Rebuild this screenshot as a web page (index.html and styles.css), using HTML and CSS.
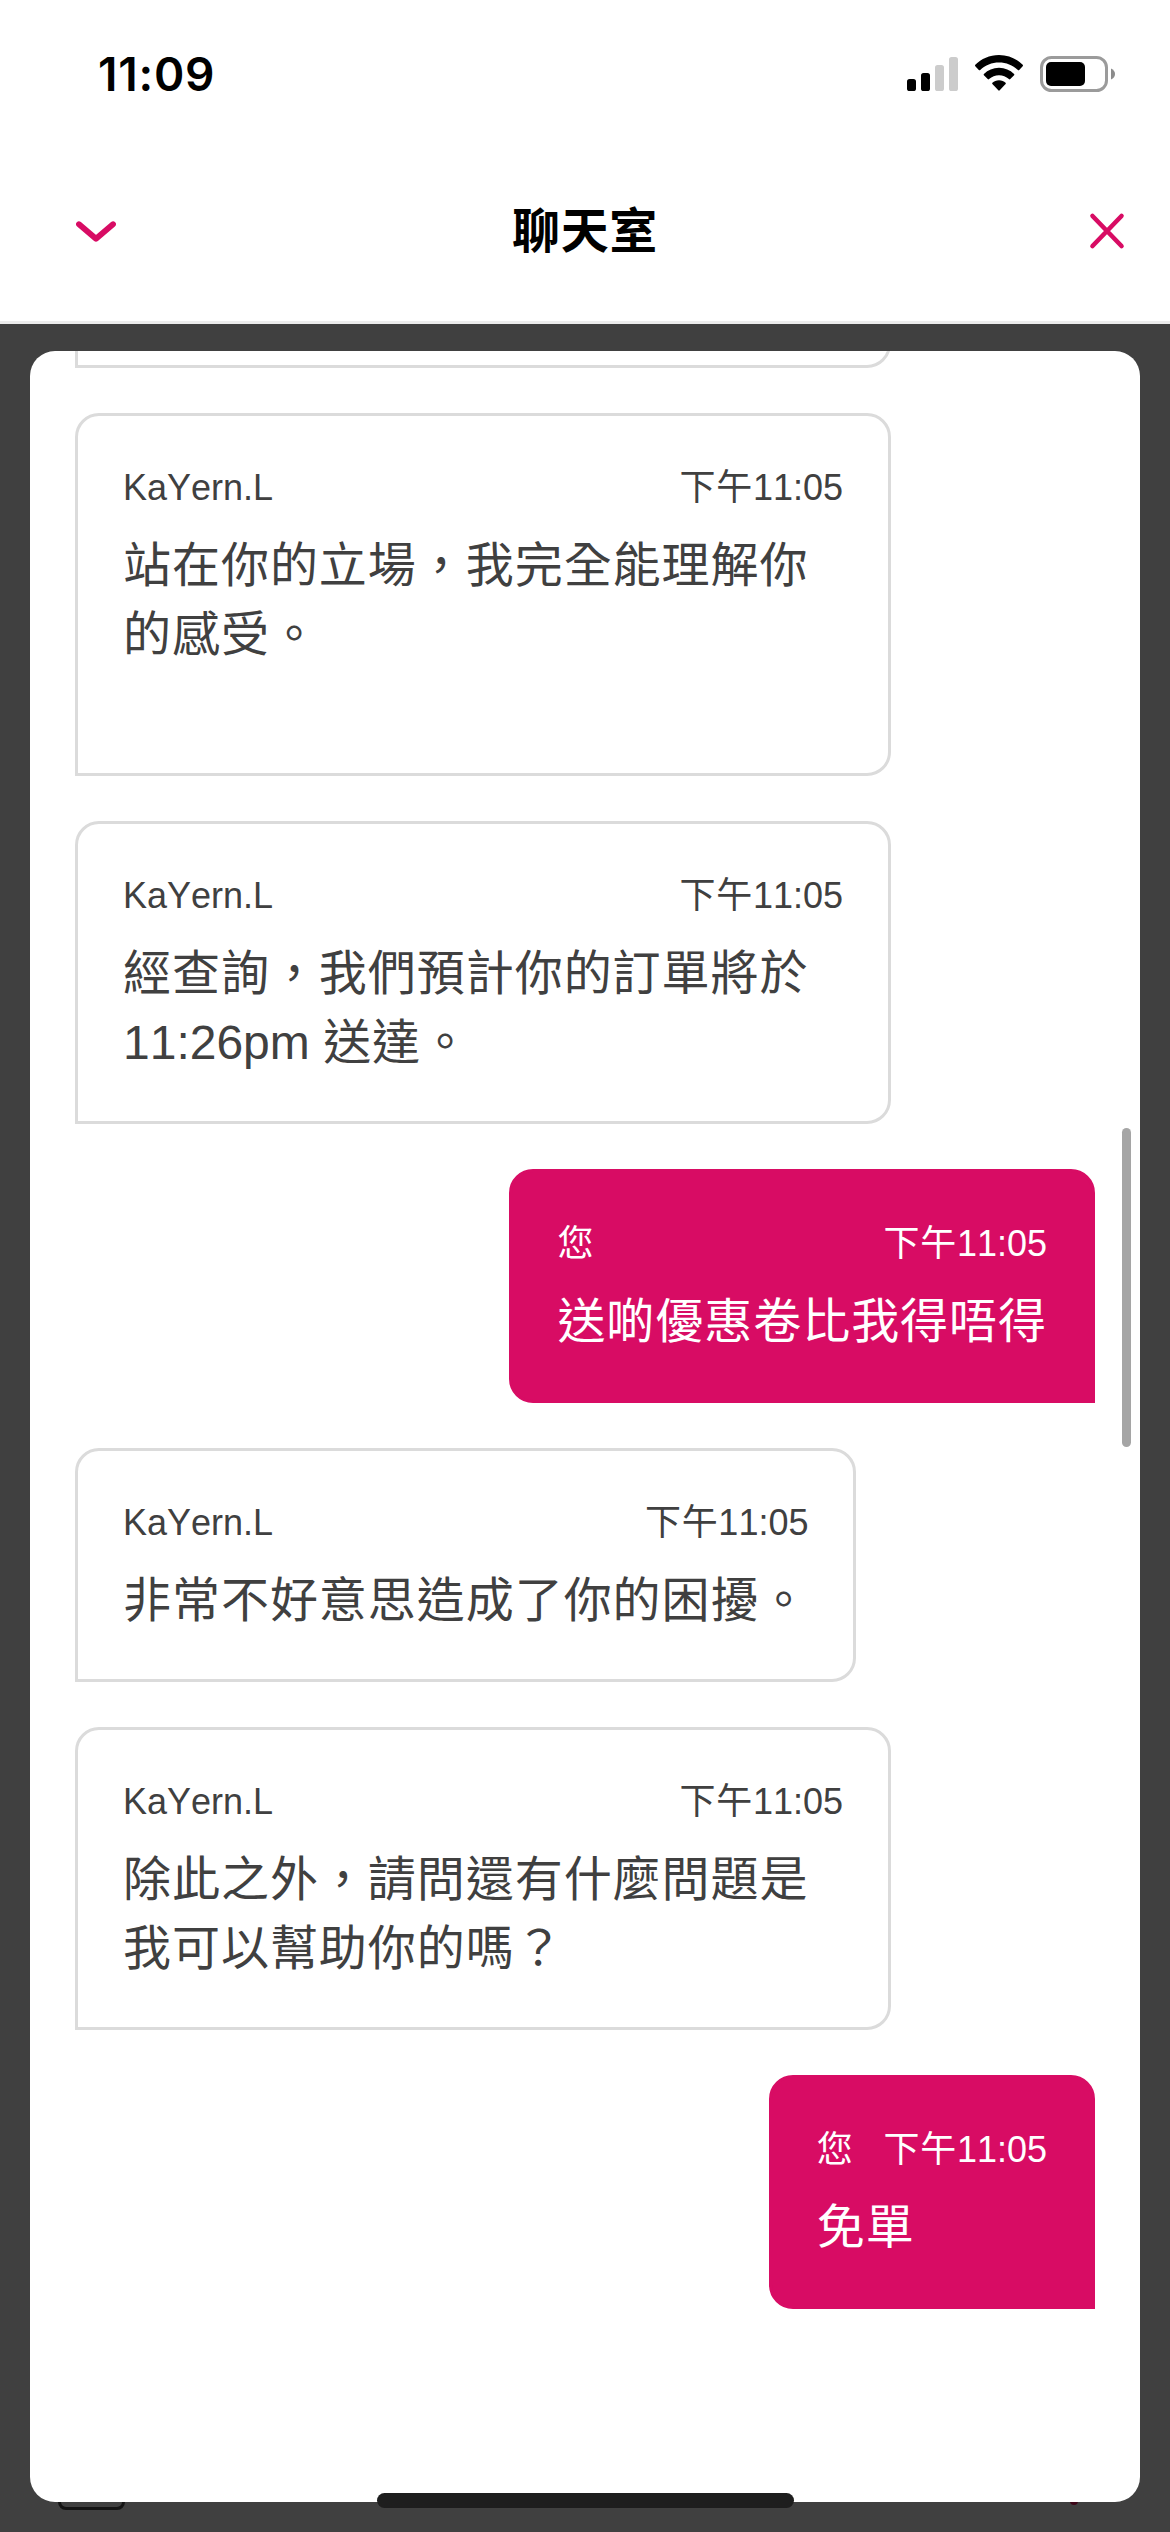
FILE: index.html
```html
<!DOCTYPE html>
<html lang="zh-Hant">
<head>
<meta charset="utf-8">
<title>聊天室</title>
<link rel="stylesheet" href="styles.css">
</head>
<body>
<div class="status">
  <span class="clock">11:09</span>
  <div class="indicators">
    <svg class="signal" width="51" height="34" viewBox="0 0 51 34">
      <rect x="0" y="22" width="9" height="12" rx="2.6"/>
      <rect x="14" y="16" width="9" height="18" rx="2.6"/>
      <rect class="off" x="28" y="8" width="9" height="26" rx="2.6"/>
      <rect class="off" x="42" y="0" width="9" height="34" rx="2.6"/>
    </svg>
    <svg class="wifi" width="48" height="36" viewBox="0 0 48 36">
      <path d="M24 0C33.500 0 41.700 3.800 47.700 9.800Q48.300 10.500 47.700 11.200L44.200 14.900Q43.500 15.500 42.800 14.900C37.700 10.100 31.200 7.500 24 7.500S10.300 10.100 5.200 14.900Q4.500 15.500 3.800 14.900L.3 11.200Q-.3 10.500.3 9.800C6.300 3.800 14.500 0 24 0Z"/>
      <path d="M24 12.800C30 12.800 35 15.100 39.100 18.900Q39.700 19.500 39.100 20.200L35.300 24.100Q34.600 24.700 33.900 24.100C31.100 21.600 27.800 20.200 24 20.200S16.900 21.600 14.100 24.100Q13.400 24.700 12.700 24.100L8.900 20.200Q8.300 19.500 8.900 18.900C13 15.100 18 12.800 24 12.800Z"/>
      <path d="M24 25.300C26.700 25.300 28.900 26.200 30.600 27.800Q31.200 28.400 30.600 29.100L24.700 35.300Q24 36 23.300 35.300L17.400 29.100Q16.800 28.400 17.400 27.800C19.100 26.200 21.300 25.300 24 25.300Z"/>
    </svg>
    <svg class="battery" width="76" height="36" viewBox="0 0 76 36">
      <rect class="shell" x="1.500" y="1.500" width="65" height="33" rx="10"/>
      <rect x="6" y="6" width="39" height="24" rx="5"/>
      <path class="cap" d="M71 12.500Q75 14.500 75 18T71 23.500Z"/>
    </svg>
  </div>
</div>
<header class="bar">
  <svg class="chevron" width="40" height="21" viewBox="0 0 40 21"><path d="M3 3.200L20 17.800L37 3.200"/></svg>
  <h1>聊天室</h1>
  <svg class="close" width="34" height="34" viewBox="0 0 34 34"><path d="M2.500 2L31.500 32M31.500 2L2.500 32"/></svg>
</header>
<main class="stage">
  <span class="input-edge"></span>
  <span class="send-tip"></span>
  <section class="panel">
    <div class="bubble agent previous"></div>
    <article class="bubble agent wide tall">
      <div class="meta"><span class="latin">KaYern.L</span><span class="time">下午<span class="latin">11:05</span></span></div>
      <p>站在你的立場，我完全能理解你<br>的感受。</p>
    </article>
    <article class="bubble agent wide">
      <div class="meta"><span class="latin">KaYern.L</span><span class="time">下午<span class="latin">11:05</span></span></div>
      <p>經查詢，我們預計你的訂單將於<br><span class="latin">11:26pm </span>送達。</p>
    </article>
    <article class="bubble me">
      <div class="meta"><span>您</span><span class="time">下午<span class="latin">11:05</span></span></div>
      <p>送啲優惠卷比我得唔得</p>
    </article>
    <article class="bubble agent">
      <div class="meta"><span class="latin">KaYern.L</span><span class="time">下午<span class="latin">11:05</span></span></div>
      <p>非常不好意思造成了你的困擾。</p>
    </article>
    <article class="bubble agent wide">
      <div class="meta"><span class="latin">KaYern.L</span><span class="time">下午<span class="latin">11:05</span></span></div>
      <p>除此之外，請問還有什麼問題是<br>我可以幫助你的嗎？</p>
    </article>
    <article class="bubble me">
      <div class="meta"><span>您</span><span class="time">下午<span class="latin">11:05</span></span></div>
      <p>免單</p>
    </article>
    <span class="scrollbar"></span>
  </section>
  <span class="home"></span>
</main>
</body>
</html>
```

FILE: styles.css
```css
* { box-sizing: border-box; }

body {
  margin: 0;
  width: 1170px;
  height: 2532px;
  display: flex;
  flex-direction: column;
  overflow: hidden;
  background: #fff;
  color: #404040;
  font-family: "Liberation Sans", "Noto Sans CJK TC", sans-serif;
  font-kerning: none;
}

svg { display: block; overflow: visible; }

.status {
  height: 148px;
  padding: 0 54px 0 98px;
  display: flex;
  align-items: center;
  justify-content: space-between;
  color: #000;
}
.clock {
  font: 600 46px/1 Inter, sans-serif;
  letter-spacing: 0.8px;
}
.indicators { display: flex; align-items: center; }
.wifi { margin: -2px 17px 0; }
.signal .off { fill: #ccc; }
.battery .shell { fill: none; stroke: #9b9b9b; stroke-width: 3; }
.battery .cap { fill: #8c8c8c; }

.bar {
  height: 176px;
  padding: 0 46px 7px 76px;
  display: grid;
  grid-template-columns: 40px 1fr 34px;
  align-items: center;
  border-bottom: 3px solid #ececec;
}
.bar path {
  fill: none;
  stroke: #d80c64;
  stroke-linecap: round;
  stroke-linejoin: round;
}
.chevron path { stroke-width: 5.8; }
.close path { stroke-width: 4.6; }
h1 {
  margin: 0;
  padding: 0 36px 8px 0;
  text-align: center;
  color: #000;
  font: 700 48px/72px "Noto Sans CJK TC", sans-serif;
  letter-spacing: 0.7px;
}

.stage {
  position: relative;
  flex: 1;
  padding: 27px 30px 30px;
  background: #404040;
}
.panel {
  position: relative;
  height: 2151px;
  padding: 0 45px;
  display: flex;
  flex-direction: column;
  gap: 45px;
  overflow: hidden;
  border-radius: 25px;
  background: #fff;
}

.bubble {
  flex: none;
  padding: 45px;
  border: 3px solid #dbdbdb;
  border-radius: 24px;
}
.agent { align-self: flex-start; border-bottom-left-radius: 0; }
.me {
  align-self: flex-end;
  border-color: #d80c64;
  border-bottom-right-radius: 0;
  background: #d80c64;
  color: #fff;
}
.wide { width: 816px; }
.tall { padding-bottom: 105px; }
.previous { width: 816px; height: 120px; margin-top: -103px; }

.meta {
  height: 54px;
  margin-bottom: 16px;
  display: flex;
  justify-content: space-between;
  gap: 30px;
  font-size: 36px;
  line-height: 53px;
  letter-spacing: 0.7px;
  white-space: nowrap;
}
.bubble p {
  margin: 0 0 -1px;
  font-size: 48px;
  line-height: 69px;
  letter-spacing: 0.96px;
  white-space: nowrap;
}
.meta .latin, .bubble .latin { letter-spacing: 0; }

.scrollbar {
  position: absolute;
  top: 777px;
  right: 9px;
  width: 9px;
  height: 319px;
  border-radius: 5px;
  background: #a5a5a5;
}
.home {
  position: absolute;
  left: 377px;
  bottom: 24px;
  width: 417px;
  height: 15px;
  border-radius: 8px;
  background: #1e1e1e;
}
.input-edge {
  position: absolute;
  left: 58px;
  bottom: 22px;
  width: 67px;
  height: 40px;
  border: 3px solid #141414;
  border-radius: 8px;
}
.send-tip {
  position: absolute;
  left: 1070px;
  bottom: 27px;
  width: 8px;
  height: 8px;
  border-radius: 4px;
  background: #3d0618;
}
```
